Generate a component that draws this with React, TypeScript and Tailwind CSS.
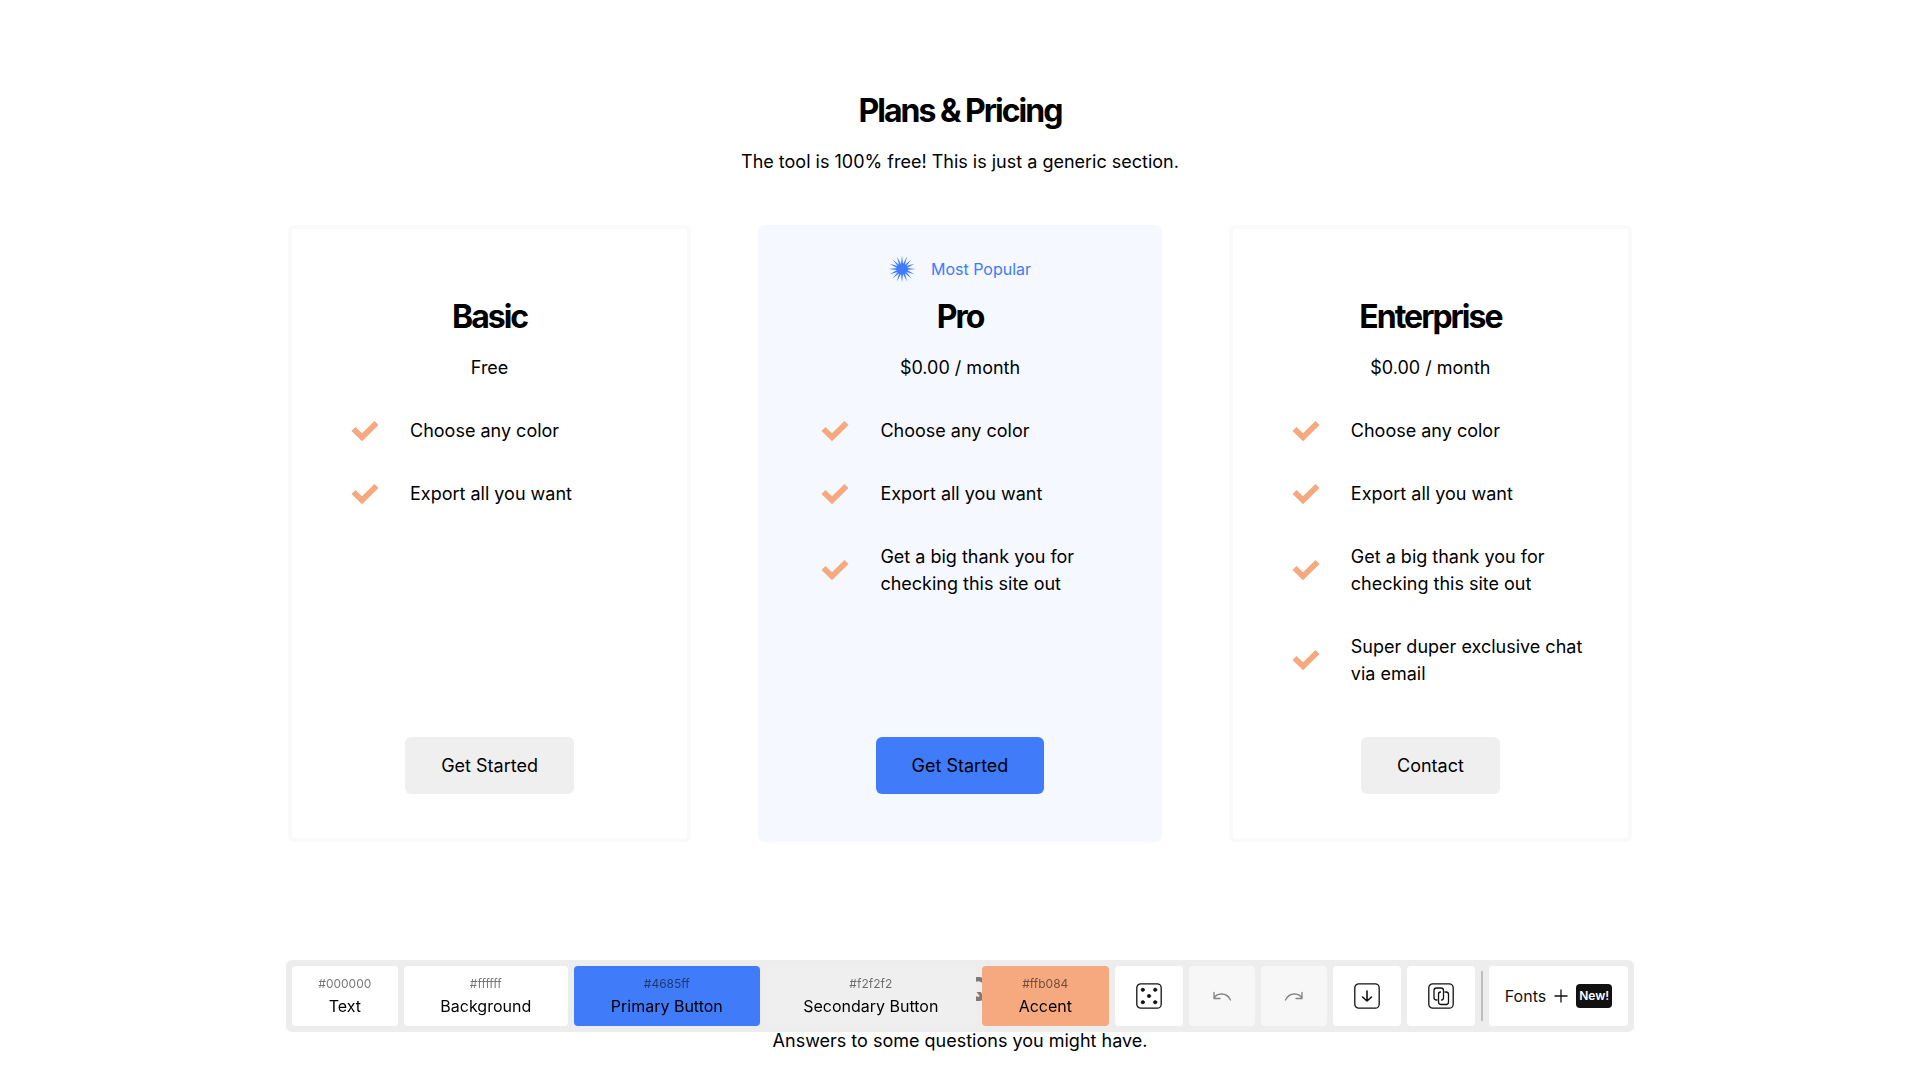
import type { ReactNode } from "react";

type Plan = { name: string; price: string; features: string[]; action: string; popular?: boolean };

const plans: Plan[] = [
  { name: "Basic", price: "Free", features: ["Choose any color", "Export all you want"], action: "Get Started" },
  {
    name: "Pro",
    price: "$0.00 / month",
    features: ["Choose any color", "Export all you want", "Get a big thank you for checking this site out"],
    action: "Get Started",
    popular: true,
  },
  {
    name: "Enterprise",
    price: "$0.00 / month",
    features: [
      "Choose any color",
      "Export all you want",
      "Get a big thank you for checking this site out",
      "Super duper exclusive chat via email",
    ],
    action: "Contact",
  },
];

const swatches = [
  { label: "Text", hex: "#000000", look: "bg-white w-[106px]" },
  { label: "Background", hex: "#ffffff", look: "bg-white w-[164px]" },
  { label: "Primary Button", hex: "#4685ff", look: "bg-[#407bfa] w-[186px]" },
  { label: "Secondary Button", hex: "#f2f2f2", look: "bg-[#efefef] w-[210px]" },
  { label: "Accent", hex: "#ffb084", look: "bg-[#f6a97e] w-[127px]" },
];

function Check() {
  return (
    <svg viewBox="0 0 28 22" className="h-[22px] w-7 shrink-0" fill="none" stroke="#f6a97e" strokeWidth="5.8" aria-hidden="true">
      <path d="M2.5 9 L11 17.3 L25.5 3" />
    </svg>
  );
}

function Burst() {
  const points = Array.from({ length: 32 }, (_, i) => {
    const r = i % 2 === 0 ? 13.4 : 5.2;
    const a = (i * Math.PI) / 16;
    return `${13 + r * Math.sin(a)},${13 - r * Math.cos(a)}`;
  }).join(" ");
  return (
    <svg viewBox="0 0 26 26" className="size-[26px] overflow-visible" fill="#407bfa" aria-hidden="true">
      <polygon points={points} />
    </svg>
  );
}

function PlanCard({ plan }: { plan: Plan }) {
  return (
    <article
      className={`flex w-[30%] flex-col items-center rounded-md border-4 px-11 pb-11 pt-6 ${
        plan.popular ? "border-[#f5f8ff] bg-[#f5f8ff]" : "border-[#fafafa] bg-white"
      }`}
    >
      <div className="flex h-8 items-center gap-4 text-base text-[#407bfa]">
        {plan.popular && (
          <>
            <Burst />
            <span>Most Popular</span>
          </>
        )}
      </div>
      <h3 className="mt-2 text-[32px] font-bold leading-[48px] tracking-[-2px]">{plan.name}</h3>
      <p className="mt-[13px]">{plan.price}</p>
      <ul className="mt-9 flex w-full flex-col gap-9 pl-[15px]">
        {plan.features.map((f) => (
          <li key={f} className="flex items-center gap-[31px]">
            <Check />
            <span>{f}</span>
          </li>
        ))}
      </ul>
      <button className={`mt-auto h-[57px] rounded-md px-9 ${plan.popular ? "bg-[#407bfa]" : "bg-[#efefef]"}`}>
        {plan.action}
      </button>
    </article>
  );
}

function Icon({ children, size }: { children: ReactNode; size: string }) {
  return (
    <svg
      viewBox="0 0 26 26"
      className={size}
      fill="none"
      stroke="#111"
      strokeWidth="1.3"
      strokeLinecap="round"
      strokeLinejoin="round"
      aria-hidden="true"
    >
      {children}
    </svg>
  );
}

function Tool({ label, children, disabled }: { label: string; children: ReactNode; disabled?: boolean }) {
  return (
    <button
      aria-label={label}
      disabled={disabled}
      className={`flex h-[60px] items-center justify-center rounded ${disabled ? "w-[66px] bg-[#f7f7f7]" : "w-[68px] bg-white"}`}
    >
      <Icon size={disabled ? "size-[26px] opacity-50" : "size-[26px]"}>{children}</Icon>
    </button>
  );
}

function Toolbar() {
  return (
    <div className="fixed inset-x-0 bottom-12 flex justify-center">
      <div role="toolbar" aria-label="Color palette" className="flex items-center gap-1.5 rounded-md bg-[#dfdfdf]/55 p-1.5">
        {swatches.map((s) => (
          <button key={s.label} className={`flex h-[60px] flex-col items-center justify-center rounded pt-0.5 ${s.look}`}>
            <span className="text-xs leading-4 text-black/55">{s.hex}</span>
            <span className="mt-0.5 text-base leading-6">{s.label}</span>
          </button>
        ))}
        <Tool label="Randomize">
          <rect x="0.8" y="0.8" width="24.4" height="24.4" rx="4" />
          <g fill="#111" strokeWidth="0.6">
            <circle cx="6.8" cy="6.8" r="1.7" />
            <circle cx="19.2" cy="6.8" r="1.7" />
            <circle cx="13" cy="13" r="1.7" />
            <circle cx="6.8" cy="19.2" r="1.7" />
            <circle cx="19.2" cy="19.2" r="1.7" />
          </g>
        </Tool>
        <Tool label="Undo" disabled>
          <path d="M5 9.5 V15.5 H11 M5 15.5 C7 10.5 17 8 21.5 17" />
        </Tool>
        <Tool label="Redo" disabled>
          <path d="M21 9.5 V15.5 H15 M21 15.5 C19 10.5 9 8 4.5 17" />
        </Tool>
        <Tool label="Export">
          <rect x="0.8" y="0.8" width="24.4" height="24.4" rx="4" />
          <path strokeWidth="1.6" d="M13 8 V18 M8.5 14 L13 18 L17.5 14" />
        </Tool>
        <Tool label="Copy link">
          <rect x="0.8" y="0.8" width="24.4" height="24.4" rx="4" />
          <path d="M9 17 H8.5 Q6 17 6 14.5 V7.5 Q6 5 8.5 5 H13 Q15.5 5 15.5 7.5 V14.5 Q15.5 17 13.5 17" />
          <path d="M17 9 H18 Q20.5 9 20.5 11.5 V19 Q20.5 21.5 18 21.5 H13.5 Q10.5 21.5 10.5 19 V11.5 Q10.5 9 12.5 9" />
        </Tool>
        <div className="h-[50px] w-0.5 bg-[#bdbdbd]" />
        <button className="flex h-[60px] items-center rounded bg-white px-4 text-base text-[#111]">
          <span>Fonts</span>
          <svg viewBox="0 0 14 14" className="ml-2 size-3.5" stroke="#111" strokeWidth="1.3" aria-hidden="true">
            <path d="M7 0.5 V13.5 M0.5 7 H13.5" />
          </svg>
          <span className="ml-2 flex h-6 w-9 items-center justify-center rounded bg-[#111] text-xs font-semibold text-white">New!</span>
        </button>
      </div>
    </div>
  );
}

export default function App() {
  return (
    <div className="h-screen overflow-hidden bg-white font-['Inter',sans-serif] text-lg leading-[27px] text-black">
      <main className="mx-auto w-[70%]">
        <section className="pt-[87px]">
          <header className="text-center">
            <h2 className="text-[32px] font-bold leading-[48px] tracking-[-2px]">Plans &amp; Pricing</h2>
            <p className="mt-[13px]">The tool is 100% free! This is just a generic section.</p>
          </header>
          <div className="mt-[50px] flex min-h-[617px] justify-between">
            {plans.map((p) => (
              <PlanCard key={p.name} plan={p} />
            ))}
          </div>
        </section>
        <section className="pt-[124px] text-center">
          <h2 className="text-[32px] font-bold leading-[48px] tracking-[-2px]">FAQ</h2>
          <p className="mt-[13px]">Answers to some questions you might have.</p>
        </section>
      </main>
      <Toolbar />
    </div>
  );
}
